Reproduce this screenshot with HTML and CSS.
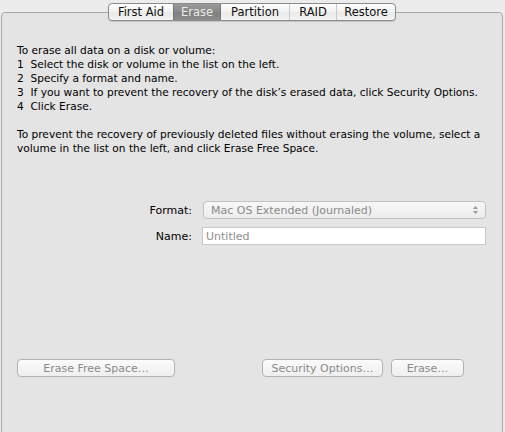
FILE: index.html
```html
<!DOCTYPE html>
<html>
<head>
<meta charset="utf-8">
<link rel="stylesheet" href="styles.css">
</head>
<body>
<div class="pane">
  <div class="tabs">
    <div class="tab">First Aid</div>
    <div class="tab selected">Erase</div>
    <div class="tab">Partition</div>
    <div class="tab sep">RAID</div>
    <div class="tab sep">Restore</div>
  </div>
  <div class="content">
    <p class="info">To erase all data on a disk or volume:<br>1&nbsp;&nbsp;Select the disk or volume in the list on the left.<br>2&nbsp;&nbsp;Specify a format and name.<br>3&nbsp;&nbsp;If you want to prevent the recovery of the disk’s erased data, click Security Options.<br>4&nbsp;&nbsp;Click Erase.</p>
    <p class="info">To prevent the recovery of previously deleted files without erasing the volume, select a<br>volume in the list on the left, and click Erase Free Space.</p>
    <div class="form">
      <div class="row">
        <label class="lbl">Format:</label>
        <div class="popup"><span>Mac OS Extended (Journaled)</span>
          <svg width="7" height="10" viewBox="0 0 7 10"><path d="M1 4 L3.5 1 L6 4 Z M1 6 L3.5 9 L6 6 Z" fill="#9a9a9a"/></svg>
        </div>
      </div>
      <div class="row">
        <label class="lbl">Name:</label>
        <div class="field">Untitled</div>
      </div>
    </div>
    <div class="buttons">
      <div class="btn wide">Erase Free Space…</div>
      <div class="spacer"></div>
      <div class="btn sec">Security Options…</div>
      <div class="btn erase">Erase…</div>
    </div>
  </div>
</div>
</body>
</html>
```
FILE: styles.css
```css
html, body {
  margin: 0;
  padding: 0;
  background: #ececec;
  font-family: "DejaVu Sans", "Liberation Sans", sans-serif;
  font-size: 11px;
  color: #000;
  overflow: hidden;
}
.pane {
  margin: 12px 0 0 1px;
  width: 502px;
  height: 440px;
  border: 1px solid #a8a8a8;
  border-radius: 4px;
  background: #e4e4e4;
  box-sizing: border-box;
}
.tabs {
  display: flex;
  width: 288px;
  height: 18px;
  margin: -10px auto 0;
  border: 1px solid #8c8c8c;
  border-radius: 4px;
  box-sizing: border-box;
  background: linear-gradient(#ffffff, #f1f1f1 50%, #e9e9e9 51%, #f4f4f4);
  overflow: hidden;
  box-shadow: 0 1px 1px rgba(0,0,0,0.15);
}
.tab {
  display: flex;
  align-items: center;
  justify-content: center;
  font-size: 11.5px;
  line-height: 16px;
  color: #111;
  padding: 0;
}
.tab:nth-child(1) { width: 64px; }
.tab:nth-child(2) { width: 46px; }
.tab:nth-child(3) { width: 68px; }
.tab:nth-child(4) { width: 46px; }
.tab:nth-child(5) { flex: 1; }
.tab.sep { border-left: 1px solid #c9c9c9; }
.tab.selected {
  background: linear-gradient(#9a9a9a, #888 50%, #7e7e7e 51%, #8c8c8c);
  color: #ececec;
  border-left: 1px solid #777;
  border-right: 1px solid #777;
}
.content {
  padding: 22px 0 0 15px;
}
.info {
  margin: 0 0 14px;
  font-size: 10.6px;
  line-height: 14px;
  white-space: nowrap;
  color: #000;
}
.form {
  display: flex;
  flex-direction: column;
  gap: 8px;
  margin-top: 46px;
}
.row {
  display: flex;
  align-items: center;
}
.lbl {
  width: 175px;
  text-align: right;
  padding-right: 10px;
  font-size: 11px;
}
.popup {
  width: 283px;
  height: 18px;
  box-sizing: border-box;
  border: 1px solid #c2c2c2;
  border-radius: 4px;
  background: linear-gradient(#f7f7f7, #ececec);
  display: flex;
  align-items: center;
  justify-content: space-between;
  padding: 0 6px 0 7px;
  color: #8a8a8a;
  font-size: 11px;
  margin-left: 1px;
}
.field {
  width: 284px;
  height: 18px;
  box-sizing: border-box;
  border: 1px solid #c8c8c8;
  background: #fff;
  color: #8d8d8d;
  display: flex;
  align-items: center;
  padding-left: 3px;
  font-size: 11px;
}
.buttons {
  display: flex;
  align-items: center;
  margin-top: 114px;
  padding-left: 0;
  padding-right: 38px;
  gap: 8px;
}
.spacer { flex: 1; }
.btn {
  height: 18px;
  box-sizing: border-box;
  border: 1px solid #b3b3b3;
  border-radius: 4px;
  background: linear-gradient(#fbfbfb, #efefef);
  color: #8a8a8a;
  font-size: 11px;
  display: flex;
  align-items: center;
  justify-content: center;
}
.btn.wide { width: 158px; }
.btn.sec { width: 121px; }
.btn.erase { width: 73px; }
```
